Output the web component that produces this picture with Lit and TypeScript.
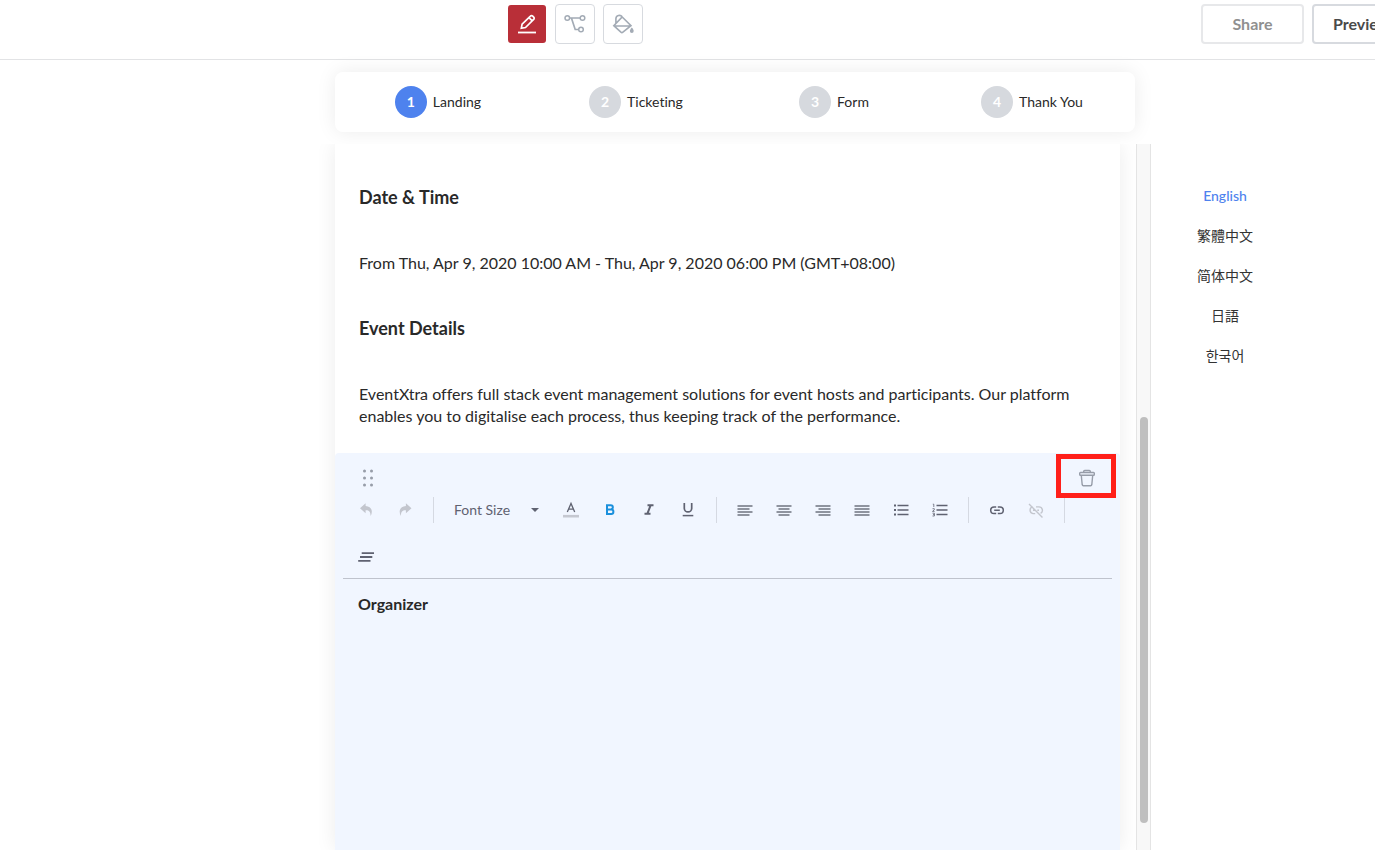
import { LitElement, html, css, svg, TemplateResult } from "lit";
import { customElement, state } from "lit/decorators.js";
import { classMap } from "lit/directives/class-map.js";

const lines = (rows: [number, number][]) =>
  svg`${rows.map(([x1, x2], i) => svg`<path d="M${x1} ${i * 3 + 5}H${x2}" stroke-width="1.7"/>`)}`;

const glyphs: Record<string, TemplateResult> = {
  undo: svg`<path fill="currentColor" stroke="none" d="M8.600 2.200 3 7.200l5.600 5V9.300c3.200-.2 5 1.200 5 5.700 2.400-4 1.500-9.600-5-9.900z"/>`,
  redo: svg`<path fill="currentColor" stroke="none" d="M9.900 2.200 15.500 7.200l-5.600 5V9.300c-3.200-.2-5 1.200-5 5.700C2.500 11 3.400 5.400 9.900 5.100z"/>`,
  color: svg`<path d="M5.300 11 9 2.500 12.700 11M6.600 8.200h4.800" stroke-width="1.300"/><path d="M1 15.200h16" stroke="#c5c8d1" stroke-width="2.600"/>`,
  bold: svg`<path d="M6 4.200h3.700a2.100 2.100 0 0 1 0 4.300H6zM6 8.500h4.200a2.200 2.200 0 0 1 0 4.400H6z" stroke-width="2"/>`,
  italic: svg`<path d="M7.500 4.200h6M4.500 12.800h6M10.700 4.200 7.300 12.800" stroke-width="2"/>`,
  underline: svg`<path d="M5.300 2v5.200a3.700 3.700 0 0 0 7.400 0V2" stroke-width="1.700"/><path d="M3.700 14.600h10.600" stroke-width="1.500"/>`,
  left: lines([[1.5, 16.5], [1.5, 13.5], [1.5, 16.5], [1.5, 13.5]]),
  center: lines([[1.5, 16.5], [3.5, 14.5], [1.5, 16.5], [3.5, 14.5]]),
  right: lines([[1.5, 16.5], [4.5, 16.5], [1.5, 16.5], [4.5, 16.5]]),
  justify: lines([[1.5, 16.5], [1.5, 16.5], [1.5, 16.5], [1.5, 16.5]]),
  bullets: svg`<path d="M5.500 4.500h11M5.500 9h11M5.500 13.500h11" stroke-width="1.400"/><path d="M2 4.500h2M2 9h2M2 13.500h2" stroke-width="2"/>`,
  numbers: svg`<path d="M5.500 4.500h11M5.500 9h11M5.500 13.500h11" stroke-width="1.400"/><path d="M1.800 3.200h1V6M1.500 7.700H3.300V8.800L1.500 10.400H3.600M1.500 12.200H3.400V15H1.500M2 13.600h1.400" stroke-width=".8"/>`,
  link: svg`<path d="M8.200 6H6a3.300 3.300 0 0 0 0 6.600h2.200M9.800 6H12a3.300 3.300 0 0 1 0 6.600H9.800M6.200 9.300h5.600" stroke-width="1.500"/>`,
  unlink: svg`<path d="M5.800 5.900a3.400 3.400 0 0 0 .2 6.700h2.200M9 5.900h3a3.400 3.400 0 0 1 1.600 6.400M10.300 9.300h1.700M6 9.300h2M2 3 15.500 16.500" stroke-width="1.400"/>`,
  clear: svg`<path d="M4.700 5.200H17M3 9h12.300M1.200 12.800H13.500" stroke-width="1.800"/>`,
};

const glyph = (name: string) => html`<svg class="glyph" viewBox="0 0 18 18" aria-hidden="true">${glyphs[name]}</svg>`;

@customElement("editor-toolbar")
export class EditorToolbar extends LitElement {
  static styles = css`
    :host { display: block; }
    .bar {
      display: flex;
      flex-wrap: wrap;
      align-items: center;
      row-gap: 7px;
      padding: 0 3px 1px;
      border-bottom: 1px solid #bfc3cd;
    }
    .tool {
      width: 39px;
      height: 40px;
      padding: 0;
      border: 0;
      background: none;
      color: #5f6271;
      display: grid;
      place-items: center;
      cursor: pointer;
    }
    .tool.soft { color: #7e828e; }
    .tool.on { color: #1b90dc; }
    .tool:disabled { color: #c3c6ce; cursor: default; }
    .glyph { width: 18px; height: 18px; fill: none; stroke: currentColor; }
    .rule { width: 1px; height: 26px; margin: 0 8px 0 9px; background: #d5d9e2; }
    .size { position: relative; width: 109px; }
    .size select {
      width: 100%;
      height: 40px;
      padding: 0 0 0 12px;
      border: 0;
      appearance: none;
      background: none;
      color: #5f6271;
      font: 14px/20px Lato, sans-serif;
    }
    .caret {
      position: absolute;
      right: 12px;
      top: 18px;
      border: 4px solid transparent;
      border-top-color: #5f6271;
      border-bottom: 0;
      pointer-events: none;
    }
  `;

  @state() private bold = true;

  private tool(name: string, label: string, soft = false, disabled = false) {
    return html`<button class=${classMap({ tool: true, soft })} aria-label=${label} ?disabled=${disabled}>${glyph(name)}</button>`;
  }

  render() {
    const rule = html`<span class="rule"></span>`;
    return html`
      <div class="bar" role="toolbar" aria-label="Formatting">
        ${this.tool("undo", "Undo", false, true)} ${this.tool("redo", "Redo", false, true)} ${rule}
        <div class="size">
          <select aria-label="Font Size">
            <option>Font Size</option>
          </select>
          <span class="caret"></span>
        </div>
        ${this.tool("color", "Text color")}
        <button
          class=${classMap({ tool: true, on: this.bold })}
          aria-label="Bold"
          aria-pressed=${this.bold}
          @click=${() => (this.bold = !this.bold)}
        >${glyph("bold")}</button>
        ${this.tool("italic", "Italic")} ${this.tool("underline", "Underline")} ${rule}
        ${this.tool("left", "Align left", true)} ${this.tool("center", "Align center", true)}
        ${this.tool("right", "Align right", true)} ${this.tool("justify", "Justify", true)}
        ${this.tool("bullets", "Bulleted list")} ${this.tool("numbers", "Numbered list")} ${rule}
        ${this.tool("link", "Insert link")} ${this.tool("unlink", "Remove link", false, true)} ${rule}
        ${this.tool("clear", "Clear formatting")}
      </div>
    `;
  }
}

@customElement("app-root")
export class AppRoot extends LitElement {
  static styles = css`
    :host {
      display: block;
      height: 100vh;
      overflow: hidden;
      background: #fff;
      color: #292929;
      font: 14px/20px Lato, "Noto Sans CJK TC", "Noto Sans CJK KR", sans-serif;
      font-variant-ligatures: none;
    }
    * { box-sizing: border-box; }
    button { font: inherit; cursor: pointer; }
    .page { min-width: 1470px; height: 100%; display: flex; flex-direction: column; }

    .top {
      display: grid;
      grid-template-columns: 1fr 320px;
      height: 60px;
      padding-top: 4px;
      border-bottom: 1px solid #e2e3e5;
      flex: none;
    }
    .modes { display: flex; justify-content: center; gap: 8px; }
    .mode {
      width: 40px;
      height: 40px;
      padding: 0;
      display: grid;
      place-items: center;
      border: 1px solid #d7dadf;
      border-radius: 4px;
      background: #fff;
      color: #a3abb5;
    }
    .mode.on { background: #b92f38; background-clip: padding-box; border-color: transparent; color: #fff; }
    .mode svg { width: 24px; height: 24px; fill: none; stroke: currentColor; stroke-width: 1.5; }
    .actions { display: flex; gap: 8px; padding-left: 51px; }
    .action {
      height: 40px;
      padding: 0 19px;
      border: 2px solid #d7dadf;
      border-radius: 4px;
      background: #fff;
      color: #4a4a4a;
      font-size: 16px;
      font-weight: 700;
    }
    .action.faded { width: 103px; border-color: #e7e8ea; color: #909090; }

    .main {
      flex: 1;
      min-height: 0;
      display: grid;
      grid-template-columns: 1fr 832px 1fr;
    }
    .center { grid-column: 2; display: flex; flex-direction: column; min-height: 0; }
    .steps {
      display: grid;
      grid-template-columns: repeat(4, 1fr);
      flex: none;
      height: 60px;
      margin: 12px 16px;
      padding: 0 4px;
      border-radius: 8px;
      box-shadow: 0 0 20px rgba(0, 0, 0, 0.08);
    }
    .step {
      display: flex;
      align-items: center;
      justify-content: center;
      gap: 6px;
      padding: 0;
      border: 0;
      background: none;
      color: #292929;
    }
    .num {
      width: 32px;
      height: 32px;
      border-radius: 50%;
      display: grid;
      place-items: center;
      background: #d6d9de;
      color: #fff;
      font-weight: 700;
    }
    .step.on .num { background: #4e82ee; }

    .view { flex: 1; min-height: 0; display: flex; background: #fff; position: relative; }
    .clip { flex: 1; overflow: hidden; padding: 0 16px; }
    .sheet {
      min-height: 100%;
      display: flex;
      flex-direction: column;
      box-shadow: 0 0 20px rgba(0, 0, 0, 0.08);
    }
    .text { padding: 41px 24px 26px; }
    h2 { margin: 0 0 43px; font-size: 18px; line-height: 24px; font-weight: 700; }
    p { margin: 0 0 42px; font-size: 16px; line-height: 22px; }
    p:last-child { margin: 0; }
    .track {
      width: 15px;
      flex: none;
      padding: 273px 2px 27px 3px;
      border: 1px solid #e4e4e4;
      border-width: 0 1px;
      background: #f8f8f8;
    }
    .thumb { height: 100%; border-radius: 4px; background: #bfbfbf; }

    .block { position: relative; flex: 1; border-radius: 4px 4px 0 0; background: #f1f6ff; padding: 13px 8px; }
    .head { display: flex; justify-content: space-between; padding: 0 13px; }
    .icon { width: 24px; height: 24px; padding: 0; border: 0; background: none; color: #979da9; }
    .icon svg { display: block; width: 24px; height: 24px; fill: none; stroke: currentColor; }
    .marker {
      position: absolute;
      top: 1px;
      right: 4px;
      width: 60px;
      height: 44px;
      border: 5px solid #ff1f1a;
      pointer-events: none;
    }
    .body { padding: 14px 15px; font-size: 16px; line-height: 22px; font-weight: 700; outline: 0; }

    .langs { display: flex; flex-direction: column; align-items: center; gap: 20px; width: 148px; padding-top: 126px; }
    .lang { color: #333; text-decoration: none; white-space: nowrap; line-height: 20px; height: 20px; }
    .lang.on { color: #4e82ee; font-weight: 500; }
  `;

  @state() private step = 0;
  @state() private lang = "en";

  private steps = ["Landing", "Ticketing", "Form", "Thank You"];
  private langs = [
    ["en", "English"],
    ["zh-Hant", "繁體中文"],
    ["zh-Hans", "简体中文"],
    ["ja", "日語"],
    ["ko", "한국어"],
  ];

  render() {
    return html`
      <div class="page">
        <header class="top">
          <nav class="modes" aria-label="Editor mode">
            <button class="mode on" aria-label="Edit">
              <svg viewBox="0 0 24 24"><path d="m6.300 16.300.8-4.200 8.300-8a1.600 1.600 0 0 1 2.300 0l1 1a1.600 1.600 0 0 1 0 2.300l-8.200 8.100zM14 5.700l3.200 3.200" stroke-width="1.700"/><path d="M3 20.500h18" stroke-width="1.800"/></svg>
            </button>
            <button class="mode" aria-label="Workflow">
              <svg viewBox="0 0 24 24"><circle cx="4.300" cy="6" r="2.300"/><circle cx="19.500" cy="6" r="2.300"/><circle cx="18" cy="17.500" r="2.300"/><path d="M6.600 6h10.600M8.500 6.200l3.700 11.300h3.500" stroke-width="1.700"/></svg>
            </button>
            <button class="mode" aria-label="Theme">
              <svg viewBox="0 0 24 24"><path d="M11.200 5 20 13.600 11.900 20.200a1.600 1.600 0 0 1-2 0L2.800 13.600zM3.500 14H20M4.900 11.200V6.600a3.400 3.400 0 0 1 6.300-1.600" stroke-width="1.600"/><path d="M20.800 15.600c1.300 1.700 1.900 2.500 1.900 3.500a1.900 1.900 0 0 1-3.800 0c0-1 .6-1.800 1.900-3.500z" fill="currentColor" stroke="none"/></svg>
            </button>
          </nav>
          <div class="actions">
            <button class="action faded">Share</button>
            <button class="action">Preview</button>
          </div>
        </header>

        <main class="main">
          <section class="center">
            <nav class="steps" aria-label="Pages">
              ${this.steps.map(
                (name, i) => html`<button class=${classMap({ step: true, on: i === this.step })} @click=${() => (this.step = i)}>
                  <span class="num">${i + 1}</span><span>${name}</span>
                </button>`,
              )}
            </nav>
            <div class="view">
              <div class="clip">
                <article class="sheet">
                  <div class="text">
                    <h2>Date &amp; Time</h2>
                    <p>From Thu, Apr 9, 2020 10:00 AM - Thu, Apr 9, 2020 06:00 PM (GMT+08:00)</p>
                    <h2>Event Details</h2>
                    <p>EventXtra offers full stack event management solutions for event hosts and participants. Our platform enables you to digitalise each process, thus keeping track of the performance.</p>
                  </div>
                  <div class="block">
                    <div class="head">
                      <button class="icon" aria-label="Move block">
                        <svg viewBox="0 0 24 24"><path d="M8.500 5h.01M15.500 5h.01M8.500 12h.01M15.500 12h.01M8.500 19h.01M15.500 19h.01" stroke-width="3" stroke-linecap="round"/></svg>
                      </button>
                      <button class="icon" aria-label="Delete block">
                        <svg viewBox="0 0 24 24" stroke-width="1.400" stroke-linejoin="round"><rect x="4.700" y="6.500" width="14.600" height="2.800" rx=".8"/><path d="M8.700 6.300V5.500a1 1 0 0 1 1-1h4.600a1 1 0 0 1 1 1v.8M6.300 9.500l.9 9.200a1.200 1.200 0 0 0 1.200 1h7.200a1.200 1.200 0 0 0 1.200-1l.9-9.200"/></svg>
                      </button>
                    </div>
                    <editor-toolbar></editor-toolbar>
                    <div class="body" contenteditable="true" role="textbox" aria-label="Block text">Organizer</div>
                    <span class="marker"></span>
                  </div>
                </article>
              </div>
              <div class="track"><div class="thumb"></div></div>
            </div>
          </section>
          <nav class="langs" aria-label="Language">
            ${this.langs.map(
              ([code, name]) => html`<a
                href="#${code}"
                lang=${code}
                class=${classMap({ lang: true, on: code === this.lang })}
                @click=${() => (this.lang = code)}
              >${name}</a>`,
            )}
          </nav>
        </main>
      </div>
    `;
  }
}
